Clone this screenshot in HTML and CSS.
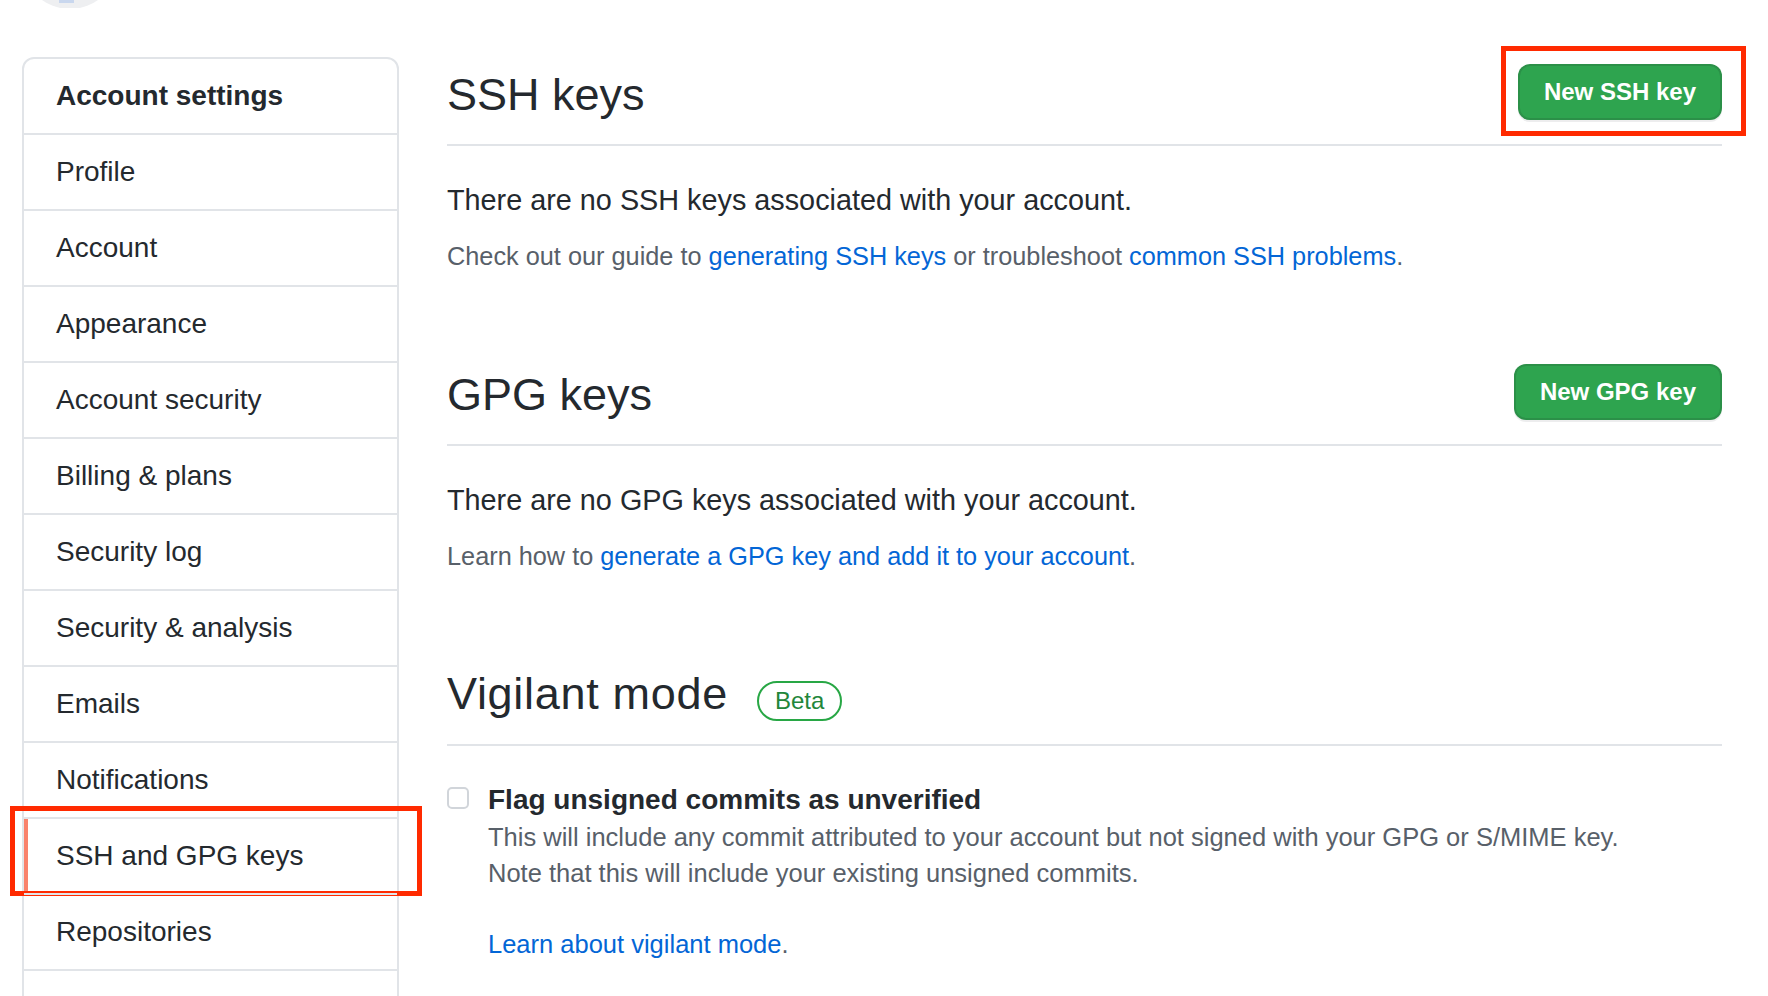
FILE: index.html
```html
<!DOCTYPE html>
<html lang="en">
<head>
<meta charset="utf-8">
<title>SSH and GPG keys</title>
<link rel="stylesheet" href="styles.css">
</head>
<body>
<header class="top">
  <div class="avatar"><span class="avatar-mark"></span></div>
</header>
<div class="layout">
  <nav class="menu">
    <div class="menu-heading">Account settings</div>
    <a class="menu-item">Profile</a>
    <a class="menu-item">Account</a>
    <a class="menu-item">Appearance</a>
    <a class="menu-item">Account security</a>
    <a class="menu-item">Billing &amp; plans</a>
    <a class="menu-item">Security log</a>
    <a class="menu-item">Security &amp; analysis</a>
    <a class="menu-item">Emails</a>
    <a class="menu-item">Notifications</a>
    <a class="menu-item selected">SSH and GPG keys<span class="annot annot-menu"></span></a>
    <a class="menu-item">Repositories</a>
    <a class="menu-item menu-item-empty"></a>
  </nav>
  <main class="content">
    <section class="section">
      <div class="subhead">
        <h2 class="subhead-heading">SSH keys</h2>
        <div class="btn-wrap"><a class="btn">New SSH key</a><span class="annot annot-btn"></span></div>
      </div>
      <p class="lead">There are no SSH keys associated with your account.</p>
      <p class="note">Check out our guide to <a class="link">generating SSH keys</a> or troubleshoot <a class="link">common SSH problems</a>.</p>
    </section>
    <section class="section">
      <div class="subhead">
        <h2 class="subhead-heading">GPG keys</h2>
        <div class="btn-wrap"><a class="btn">New GPG key</a></div>
      </div>
      <p class="lead">There are no GPG keys associated with your account.</p>
      <p class="note">Learn how to <a class="link">generate a GPG key and add it to your account</a>.</p>
    </section>
    <section class="section">
      <div class="subhead">
        <div class="title-group">
          <h2 class="subhead-heading subhead-heading-wide">Vigilant mode</h2>
          <span class="label">Beta</span>
        </div>
      </div>
      <div class="checkbox-row">
        <span class="checkbox"></span>
        <div class="check-body">
          <div class="check-label">Flag unsigned commits as unverified</div>
          <p class="check-note">This will include any commit attributed to your account but not signed with your GPG or S/MIME key.<br>Note that this will include your existing unsigned commits.</p>
          <p class="check-link"><a class="link">Learn about vigilant mode</a>.</p>
        </div>
      </div>
    </section>
  </main>
</div>
</body>
</html>
```
FILE: styles.css
```css
* { box-sizing: border-box; }

html, body {
  margin: 0;
  padding: 0;
  background: #ffffff;
}

body {
  font-family: "Liberation Sans", Arial, sans-serif;
  color: #24292e;
  height: 996px;
  overflow: hidden;
}

.top {
  height: 8px;
  overflow: hidden;
  padding-left: 22px;
}

.avatar {
  width: 96px;
  height: 96px;
  margin-top: -87px;
  border-radius: 50%;
  background: #eeeff1;
  display: flex;
  justify-content: center;
  align-items: flex-end;
}

.avatar-mark {
  width: 15px;
  height: 14px;
  margin-bottom: 6px;
  margin-left: -8px;
  background: #c9d7ee;
}

.layout {
  display: flex;
  gap: 48px;
  padding: 49px 46px 0 22px;
}

.menu {
  width: 377px;
  flex: none;
  align-self: flex-start;
  border: 2px solid #e1e4e8;
  border-radius: 12px;
  background: #fff;
}

.menu-heading {
  height: 74px;
  display: flex;
  align-items: center;
  padding-left: 32px;
  font-size: 28px;
  font-weight: bold;
  color: #24292e;
}

.menu-item {
  position: relative;
  display: flex;
  align-items: center;
  height: 76px;
  padding-left: 32px;
  border-top: 2px solid #e1e4e8;
  font-size: 28px;
  color: #24292e;
  text-decoration: none;
}

.menu-item.selected {
  box-shadow: inset 4px 0 0 #f9826c;
}

.annot {
  position: absolute;
  border: 5px solid #ff2a00;
  pointer-events: none;
}

.annot-menu {
  top: -13px;
  left: -14px;
  right: -25px;
  bottom: -3px;
}

.annot-btn {
  top: -18px;
  left: -17px;
  right: -24px;
  bottom: -16px;
}

.content {
  flex: 1;
  min-width: 0;
  padding-top: 7px;
}

.section + .section {
  margin-top: 90px;
}

.subhead {
  display: flex;
  align-items: center;
  justify-content: space-between;
  height: 82px;
  padding-bottom: 24px;
  border-bottom: 2px solid #e1e4e8;
}

.subhead-heading {
  margin: 5px 0 0;
  font-size: 45px;
  font-weight: normal;
  line-height: 1.15;
  color: #24292e;
}

.subhead-heading-wide {
  letter-spacing: 0.7px;
}

.title-group {
  display: flex;
  align-items: baseline;
  gap: 29px;
}

.label {
  display: inline-flex;
  align-items: center;
  height: 40px;
  padding: 0 16px;
  border: 2px solid #28a745;
  border-radius: 20px;
  color: #22863a;
  font-size: 24px;
}

.btn-wrap {
  position: relative;
}

.btn {
  display: flex;
  align-items: center;
  justify-content: center;
  height: 56px;
  padding: 0 24px;
  background: #2ea44f;
  border: 2px solid rgba(27, 31, 35, 0.15);
  border-radius: 12px;
  box-shadow: 0 2px 0 rgba(27, 31, 35, 0.08);
  color: #ffffff;
  font-size: 24px;
  font-weight: bold;
}

.lead {
  margin: 34px 0 0;
  font-size: 28.8px;
  line-height: 40px;
  color: #24292e;
}

.note {
  margin: 18px 0 0;
  font-size: 25.3px;
  line-height: 36px;
  color: #586069;
}

.link {
  color: #0366d6;
  text-decoration: none;
}

.checkbox-row {
  display: flex;
  gap: 19px;
  margin-top: 36px;
}

.checkbox {
  flex: none;
  width: 22px;
  height: 22px;
  margin-top: 5px;
  border: 2px solid #d1d5da;
  border-radius: 5px;
  background: #fff;
}

.check-label {
  font-size: 28px;
  font-weight: bold;
  line-height: 36px;
  color: #24292e;
}

.check-note {
  margin: 1px 0 0;
  font-size: 25.5px;
  line-height: 36px;
  color: #586069;
}

.check-link {
  margin: 35px 0 0;
  font-size: 25.5px;
  line-height: 36px;
  color: #586069;
}
```
